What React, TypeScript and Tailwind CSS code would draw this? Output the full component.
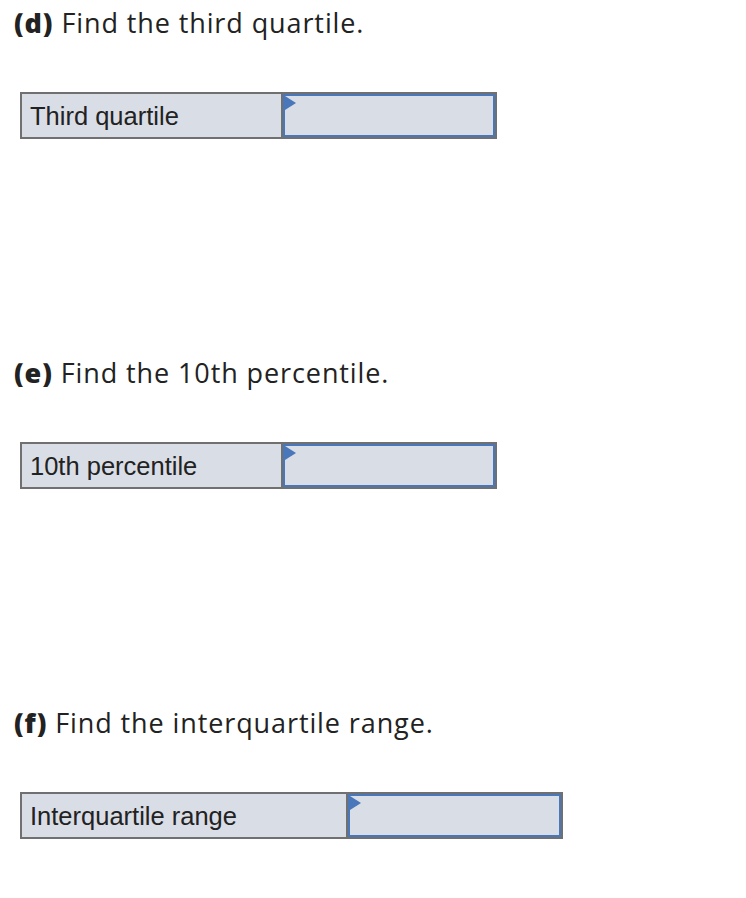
const QUESTIONS = [
  { letter: "d", text: "Find the third quartile.", label: "Third quartile", labelW: "w-[261px]", inputW: "w-[212px]" },
  { letter: "e", text: "Find the 10th percentile.", label: "10th percentile", labelW: "w-[261px]", inputW: "w-[212px]" },
  { letter: "f", text: "Find the interquartile range.", label: "Interquartile range", labelW: "w-[326px]", inputW: "w-[213px]" },
];

function AnswerRow({ label, labelW, inputW }: { label: string; labelW: string; inputW: string }) {
  return (
    <div className="flex w-fit border-2 border-[#707070] bg-[#d9dde6]">
      <div
        className={`${labelW} h-[43px] flex items-center pl-[8px] pt-[1px] text-[25.5px] text-[#222] border-r-2 border-[#707070]`}
        style={{ fontFamily: '"Liberation Sans", Arial, sans-serif' }}
      >
        {label}
      </div>
      <div className={`${inputW} h-[43px] relative border-2 border-[#4a76ba] bg-[#d9dde6]`}>
        <svg className="absolute left-0 top-0" width="11" height="14" viewBox="0 0 11 14">
          <polygon points="0,0 11,7 0,14" fill="#4a76ba" />
        </svg>
      </div>
    </div>
  );
}

export default function App() {
  return (
    <div className="bg-white min-h-[898px] w-[746px] pl-[20px]" style={{ fontFamily: "'Open Sans', Lato, sans-serif" }}>
      {QUESTIONS.map((q) => (
        <div key={q.letter} className="h-[350px] last:h-auto pt-[5px]">
          <h2 className="-ml-[6px] text-[27px] leading-[36px] tracking-[0.9px] text-[#222] font-normal">
            <span className="font-extrabold">({q.letter})</span> {q.text}
          </h2>
          <div className="mt-[51px]">
            <AnswerRow label={q.label} labelW={q.labelW} inputW={q.inputW} />
          </div>
        </div>
      ))}
    </div>
  );
}
